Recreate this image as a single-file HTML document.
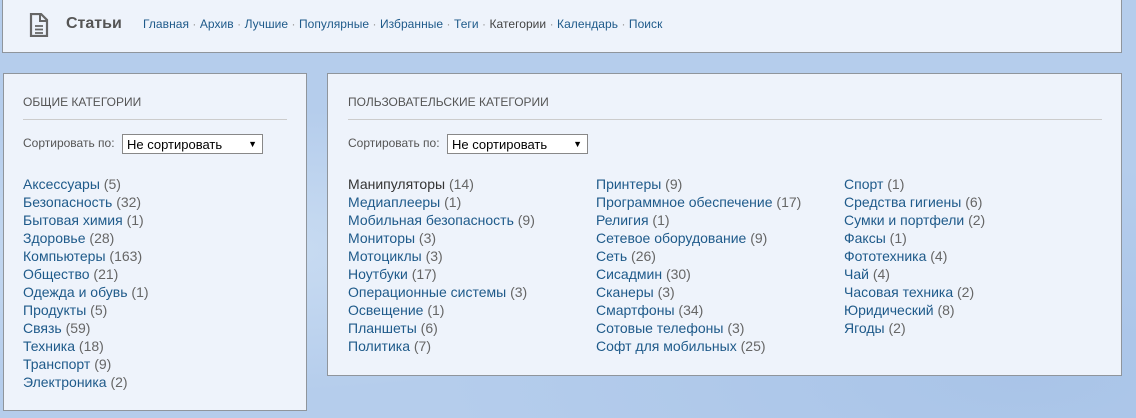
<!DOCTYPE html>
<html><head><meta charset="utf-8"><style>
*{margin:0;padding:0;box-sizing:border-box}
body{width:1136px;height:418px;overflow:hidden;font-family:"Liberation Sans",Arial,sans-serif;
background:radial-gradient(ellipse at 20% 60%,#c9dcf2 0,transparent 40%),radial-gradient(ellipse at 90% 90%,#a9c4e8 0,transparent 40%),#b5cdec;position:relative}
.box{position:absolute;background:#eef3fb;border:1px solid #8f959c}
#hdr{left:2px;top:-2px;width:1120px;height:55px}
#l{left:3px;top:73px;width:304px;height:338px}
#r{left:327px;top:73px;width:795px;height:303px}
.ttl{position:absolute;font-size:16px;font-weight:bold;color:#555;left:63px;top:16px}
.nav{position:absolute;left:140px;top:18px;font-size:12px;color:#999;white-space:nowrap;letter-spacing:0.05px}
.nav a{color:#1e5a8a;text-decoration:none}
.nav a.c{color:#444}
h3{position:absolute;font-size:12px;font-weight:normal;color:#555;top:21px}
.hr{position:absolute;top:45px;height:1px;background:#ccc}
.sort{position:absolute;top:62px;font-size:12px;color:#555}
.sel{position:absolute;top:60px;width:141px;height:20px;background:#fff;border:1px solid #888;font-size:13px;color:#000;padding:2px 4px;line-height:15px}
.sel:after{content:"▼";position:absolute;right:5px;top:2px;font-size:9px}
.col{position:absolute;top:101px;font-size:14px;line-height:18px;color:#666;white-space:nowrap}
.col a{color:#1e5a8a;text-decoration:none}
.col a.v{color:#333}
</style></head><body>
<div class="box" id="hdr">
<svg style="position:absolute;left:26px;top:14px" width="20" height="24" viewBox="0 0 20 24"><path d="M2 1h10l6 6v16H2z" fill="none" stroke="#666" stroke-width="2.2"/><path d="M11 1v7h7" fill="none" stroke="#666" stroke-width="2"/><path d="M6 13h8M6 16.5h8M6 20h8" stroke="#666" stroke-width="1.8"/></svg>
<div class="ttl">Статьи</div>
<div class="nav"><a>Главная</a> · <a>Архив</a> · <a>Лучшие</a> · <a>Популярные</a> · <a>Избранные</a> · <a>Теги</a> · <a class="c">Категории</a> · <a>Календарь</a> · <a>Поиск</a></div>
</div>
<div class="box" id="l">
<h3 style="left:19px">ОБЩИЕ КАТЕГОРИИ</h3>
<div class="hr" style="left:19px;width:264px"></div>
<div class="sort" style="left:19px">Сортировать по:</div>
<div class="sel" style="left:118px">Не сортировать</div>
<div class="col" style="left:19px">
<a>Аксессуары</a> (5)<br><a>Безопасность</a> (32)<br><a>Бытовая химия</a> (1)<br><a>Здоровье</a> (28)<br><a>Компьютеры</a> (163)<br><a>Общество</a> (21)<br><a>Одежда и обувь</a> (1)<br><a>Продукты</a> (5)<br><a>Связь</a> (59)<br><a>Техника</a> (18)<br><a>Транспорт</a> (9)<br><a>Электроника</a> (2)</div>
</div>
<div class="box" id="r">
<h3 style="left:20px">ПОЛЬЗОВАТЕЛЬСКИЕ КАТЕГОРИИ</h3>
<div class="hr" style="left:20px;width:754px"></div>
<div class="sort" style="left:20px">Сортировать по:</div>
<div class="sel" style="left:119px">Не сортировать</div>
<div class="col" style="left:20px"><a class="v">Манипуляторы</a> (14)<br><a>Медиаплееры</a> (1)<br><a>Мобильная безопасность</a> (9)<br><a>Мониторы</a> (3)<br><a>Мотоциклы</a> (3)<br><a>Ноутбуки</a> (17)<br><a>Операционные системы</a> (3)<br><a>Освещение</a> (1)<br><a>Планшеты</a> (6)<br><a>Политика</a> (7)</div>
<div class="col" style="left:268px"><a>Принтеры</a> (9)<br><a>Программное обеспечение</a> (17)<br><a>Религия</a> (1)<br><a>Сетевое оборудование</a> (9)<br><a>Сеть</a> (26)<br><a>Сисадмин</a> (30)<br><a>Сканеры</a> (3)<br><a>Смартфоны</a> (34)<br><a>Сотовые телефоны</a> (3)<br><a>Софт для мобильных</a> (25)</div>
<div class="col" style="left:516px"><a>Спорт</a> (1)<br><a>Средства гигиены</a> (6)<br><a>Сумки и портфели</a> (2)<br><a>Факсы</a> (1)<br><a>Фототехника</a> (4)<br><a>Чай</a> (4)<br><a>Часовая техника</a> (2)<br><a>Юридический</a> (8)<br><a>Ягоды</a> (2)</div>
</div>
</body></html>
